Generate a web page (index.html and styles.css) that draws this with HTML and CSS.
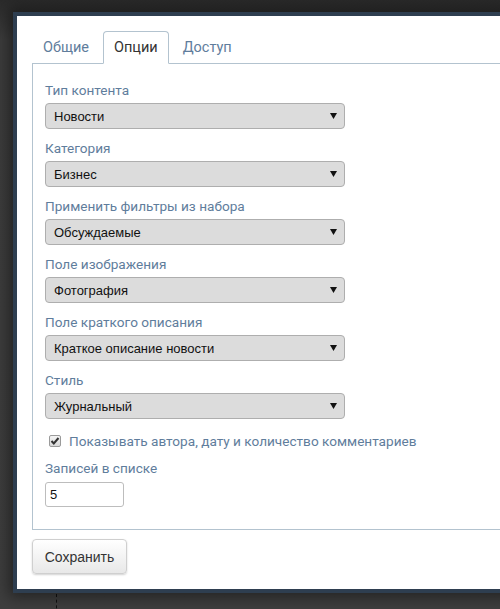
FILE: index.html
```html
<!DOCTYPE html>
<html lang="ru">
<head>
<meta charset="utf-8">
<title>Настройки</title>
<link rel="stylesheet" href="styles.css">
</head>
<body>
<div class="desk">
  <div class="desk-line"></div>
  <div class="dialog">
    <div class="tabs">
      <div class="tab">Общие</div>
      <div class="tab active">Опции</div>
      <div class="tab">Доступ</div>
    </div>
    <div class="panel">
      <div class="group">
        <div class="label">Тип контента</div>
        <div class="select"><span>Новости</span><svg class="arrow" width="7" height="6" viewBox="0 0 7 6"><path d="M0 0H7L3.5 6Z" fill="#111"/></svg></div>
      </div>
      <div class="group">
        <div class="label">Категория</div>
        <div class="select"><span>Бизнес</span><svg class="arrow" width="7" height="6" viewBox="0 0 7 6"><path d="M0 0H7L3.5 6Z" fill="#111"/></svg></div>
      </div>
      <div class="group">
        <div class="label">Применить фильтры из набора</div>
        <div class="select"><span>Обсуждаемые</span><svg class="arrow" width="7" height="6" viewBox="0 0 7 6"><path d="M0 0H7L3.5 6Z" fill="#111"/></svg></div>
      </div>
      <div class="group">
        <div class="label">Поле изображения</div>
        <div class="select"><span>Фотография</span><svg class="arrow" width="7" height="6" viewBox="0 0 7 6"><path d="M0 0H7L3.5 6Z" fill="#111"/></svg></div>
      </div>
      <div class="group">
        <div class="label">Поле краткого описания</div>
        <div class="select"><span>Краткое описание новости</span><svg class="arrow" width="7" height="6" viewBox="0 0 7 6"><path d="M0 0H7L3.5 6Z" fill="#111"/></svg></div>
      </div>
      <div class="group">
        <div class="label">Стиль</div>
        <div class="select"><span>Журнальный</span><svg class="arrow" width="7" height="6" viewBox="0 0 7 6"><path d="M0 0H7L3.5 6Z" fill="#111"/></svg></div>
      </div>
      <div class="check">
        <span class="box"><svg width="10" height="10" viewBox="0 0 10 10"><path d="M1.5 5L3.8 7.5L8.5 2" fill="none" stroke="#333" stroke-width="2"/></svg></span>
        <span class="label">Показывать автора, дату и количество комментариев</span>
      </div>
      <div class="group last">
        <div class="label">Записей в списке</div>
        <div class="input">5</div>
      </div>
    </div>
    <div class="actions">
      <button class="btn">Сохранить</button>
    </div>
  </div>
</div>
</body>
</html>
```

FILE: styles.css
```css
html, body {
  margin: 0;
  padding: 0;
}
body {
  width: 500px;
  height: 609px;
  overflow: hidden;
  background: linear-gradient(to bottom, #2a2a2a 0px, #3c3c3c 40px, #3e3e3e 100%);
  font-family: Roboto, "Open Sans", sans-serif;
}
.desk {
  position: relative;
  padding: 12px 0 0 13px;
  height: 597px;
}
.desk-line {
  position: absolute;
  left: 56px;
  top: 594px;
  height: 20px;
  border-left: 1px dashed #111;
}
.dialog {
  position: relative;
  width: 520px;
  background: #fff;
  border: 4px solid #2e3e50;
  box-shadow: 0 0 14px 4px rgba(0, 0, 0, 0.45);
  padding: 15px 0 15px 15px;
  box-sizing: border-box;
}
.tabs {
  display: flex;
  gap: 3px;
  height: 33px;
  border-bottom: 1px solid #b3c3cf;
  box-sizing: border-box;
}
.tab {
  padding: 0 10px;
  border: 1px solid transparent;
  border-radius: 4px 4px 0 0;
  font-size: 14.5px;
  line-height: 31px;
  color: #5f7d9c;
}
.tab.active {
  color: #333;
  background: #fff;
  border-color: #b3c3cf;
  border-bottom-color: #fff;
  height: 33px;
  box-sizing: border-box;
}
.panel {
  border: 1px solid #b3c3cf;
  border-top: none;
  padding: 16px 12px 22px;
}
.group {
  margin-bottom: 9px;
}
.label {
  font-size: 13.6px;
  line-height: 20px;
  color: #5f7d9c;
  margin-bottom: 3px;
}
.select {
  width: 300px;
  height: 26px;
  box-sizing: border-box;
  background: #dcdcdc;
  border: 1px solid #aeaeae;
  border-radius: 4px;
  display: flex;
  align-items: center;
  justify-content: space-between;
  padding: 0 7px 0 8px;
  font-family: "Liberation Sans", Arial, sans-serif;
  font-size: 13px;
  color: #111;
}
.arrow {
  display: block;
}
.check {
  display: flex;
  align-items: center;
  gap: 8px;
  margin: 12px 0 7px 4px;
  height: 20px;
}
.check .label {
  margin: 0;
}
.box {
  width: 10px;
  height: 10px;
  border: 1px solid #9a9a9a;
  border-radius: 2px;
  background: linear-gradient(#f4f4f4, #d8d8d8);
  display: flex;
  align-items: center;
  justify-content: center;
}
.box svg {
  display: block;
}
.group.last {
  margin-bottom: 0;
}
.group.last .label {
  margin-bottom: 4px;
}
.input {
  width: 79px;
  height: 25px;
  box-sizing: border-box;
  border: 1px solid #bdbdbd;
  border-radius: 3px;
  padding: 0 4px;
  font-family: "Liberation Sans", Arial, sans-serif;
  font-size: 13px;
  line-height: 23px;
  color: #111;
  background: #fff;
}
.actions {
  padding-top: 9px;
}
.btn {
  width: 95px;
  height: 35px;
  border: 1px solid #cfcfcf;
  border-radius: 4px;
  background: linear-gradient(#ffffff, #e8e8e8);
  box-shadow: 0 1px 2px rgba(0, 0, 0, 0.18);
  font-family: "Liberation Sans", Arial, sans-serif;
  font-size: 14px;
  color: #333;
  padding: 0;
}
```
